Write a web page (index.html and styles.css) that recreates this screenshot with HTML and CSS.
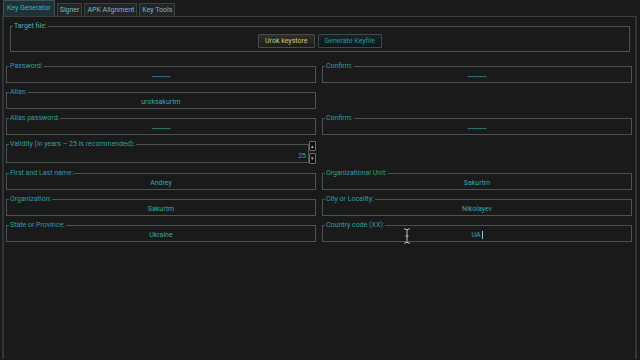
FILE: index.html
```html
<!DOCTYPE html>
<html lang="en">
<head>
    <meta charset="UTF-8">
    <title>Key Generator</title>
    <link rel="stylesheet" href="styles.css">
</head>
<body>
    <!-- Tabs -->
    <div class="tabs">
        <div class="tab active">Key Generator</div>
        <div class="tab">Signer</div>
        <div class="tab">APK Alignment</div>
        <div class="tab">Key Tools</div>
    </div>

    <div class="pane">
        <fieldset class="field target">
            <legend>Target file:</legend>
            <div class="buttons">
                <button class="btn btn-keystore">Urok keystore</button>
                <button class="btn btn-keyfile">Generate Keyfile</button>
            </div>
        </fieldset>

        <div class="form">
            <fieldset class="field">
                <legend>Password:</legend>
                <div class="value dots">•••••••••••</div>
            </fieldset>
            <fieldset class="field">
                <legend>Confirm:</legend>
                <div class="value dots">•••••••••••</div>
            </fieldset>

            <fieldset class="field">
                <legend>Alias:</legend>
                <div class="value">uroksakurtm</div>
            </fieldset>
            <div></div>

            <fieldset class="field">
                <legend>Alias password:</legend>
                <div class="value dots">•••••••••••</div>
            </fieldset>
            <fieldset class="field">
                <legend>Confirm:</legend>
                <div class="value dots">•••••••••••</div>
            </fieldset>

            <div class="validity">
                <fieldset class="field">
                    <legend>Validity (in years – 25 is recommended):</legend>
                    <div class="value number">25</div>
                </fieldset>
                <div class="spin">
                    <span class="spin-btn">▴</span>
                    <span class="spin-btn">▾</span>
                </div>
            </div>
            <div></div>

            <fieldset class="field">
                <legend>First and Last name:</legend>
                <div class="value">Andrey</div>
            </fieldset>
            <fieldset class="field">
                <legend>Organizational Unit:</legend>
                <div class="value">Sakurtm</div>
            </fieldset>

            <fieldset class="field">
                <legend>Organization:</legend>
                <div class="value">Sakurtm</div>
            </fieldset>
            <fieldset class="field">
                <legend>City or Locality:</legend>
                <div class="value">Nikolayev</div>
            </fieldset>

            <fieldset class="field">
                <legend>State or Province:</legend>
                <div class="value">Ukraine</div>
            </fieldset>
            <fieldset class="field">
                <legend>Country code (XX):</legend>
                <div class="value"><span class="caret">UA</span></div>
            </fieldset>
        </div>
    </div>

    <!-- mouse pointer -->
    <svg class="ibeam" width="8" height="16" viewBox="0 0 8 16">
        <path d="M1 1h2l1 1 1-1h2M4 2v12M1 15h2l1-1 1 1h2M2.5 8h3" fill="none" stroke="#111" stroke-width="2"/>
        <path d="M1 1h2l1 1 1-1h2M4 2v12M1 15h2l1-1 1 1h2M2.5 8h3" fill="none" stroke="#c8c8c8" stroke-width="1"/>
    </svg>
</body>
</html>
```

FILE: styles.css
```css
body {
    margin: 0;
    padding: 0;
    width: 640px;
    height: 360px;
    overflow: hidden;
    position: relative;
    background-color: #1b1a1a;
    font-family: Roboto, "Liberation Sans", sans-serif;
    font-size: 7px;
}
.tabs {
    display: flex;
    align-items: flex-end;
    gap: 2px;
    height: 16px;
    padding-left: 3px;
}
.tab {
    height: 12px;
    line-height: 12px;
    padding: 0 2px;
    border: 1px solid #3c4141;
    border-bottom: none;
    background: #242526;
    color: #7fb6bb;
}
.tab.active {
    height: 15px;
    line-height: 15px;
    padding: 0 3px;
    background: #1f3336;
    border-color: #3d5558;
    color: #3cb0b8;
}
.pane {
    height: 343px;
    box-sizing: border-box;
    margin-left: 2px;
    width: 635px;
    border: 2px solid #303535;
    border-top: 1px solid #3a4040;
    border-bottom: none;
}
.field {
    margin: 0;
    padding: 0 2px;
    min-width: 0;
    border: 1px solid #4a5553;
}
.field legend {
    padding: 0 1px;
    margin-left: 0;
    height: 8px;
    line-height: 8px;
    color: #2f9da3;
}
.value {
    height: 12px;
    line-height: 12px;
    text-align: center;
    color: #36a7ad;
}
.dots {
    font-size: 6px;
    letter-spacing: -0.3px;
    line-height: 13px;
}
.target {
    margin: 5px 5px 0 6px;
}
.target legend {
    color: #4fb0b6;
}
.buttons {
    display: flex;
    justify-content: center;
    gap: 3px;
    height: 21px;
    padding-top: 4px;
    box-sizing: border-box;
}
.btn {
    height: 14px;
    padding: 0 6px;
    font-family: Roboto, "Liberation Sans", sans-serif;
    font-size: 7px;
    border-radius: 1px;
    cursor: pointer;
}
.btn-keystore {
    color: #d2c566;
    background: linear-gradient(#2e2e2e, #1d1d1d);
    border: 1px solid #4a4a48;
}
.btn-keyfile {
    color: #2a98a2;
    background: linear-gradient(#16232a, #0e171c);
    border: 1px solid #3a4a52;
}
.form {
    display: grid;
    grid-template-columns: 1fr 1fr;
    column-gap: 6px;
    row-gap: 5px;
    margin: 10px 3px 0 2px;
}
.validity {
    display: flex;
    align-items: flex-start;
}
.validity .field {
    flex: 1;
}
.number {
    height: 14px;
    line-height: 16px;
    text-align: right;
    padding-right: 0;
}
.spin {
    display: flex;
    flex-direction: column;
    gap: 2px;
    margin-top: 1px;
}
.spin-btn {
    display: block;
    width: 5px;
    height: 8px;
    line-height: 8px;
    font-size: 5px;
    text-align: center;
    color: #c0c0c0;
    background: #101010;
    border: 1px solid #6a6e6e;
    border-radius: 1px;
}
.spin-btn + .spin-btn {
    height: 9px;
}
.caret {
    border-right: 1px solid #7fd0d6;
    padding-right: 1px;
}
.ibeam {
    position: absolute;
    left: 403px;
    top: 228px;
}
```
